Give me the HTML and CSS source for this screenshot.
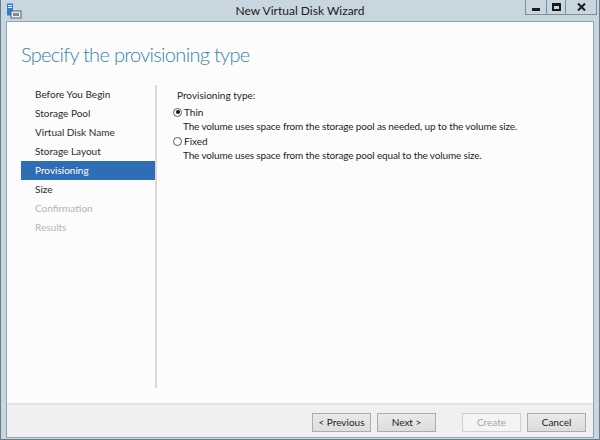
FILE: index.html
```html
<!DOCTYPE html>
<html>
<head>
<meta charset="utf-8">
<link rel="stylesheet" href="styles.css">
</head>
<body>
<div class="window">
  <div class="titlebar">
    <svg class="appicon" width="16" height="16" viewBox="0 0 16 16">
      <rect x="1" y="0.5" width="6" height="12" fill="#2f7fd0"/>
      <rect x="2" y="2" width="4" height="1" fill="#ffffff"/>
      <rect x="2" y="4" width="4" height="1" fill="#ffffff"/>
      <rect x="5" y="8" width="10" height="7" fill="#e8eef3" stroke="#56606a" stroke-width="1"/>
      <rect x="7" y="10" width="6" height="3" fill="#7d8c99"/>
    </svg>
    <div class="title">New Virtual Disk Wizard</div>
    <div class="controls">
      <div class="ctl ctl-min"><span class="min-glyph"></span></div>
      <div class="ctl ctl-max"><span class="max-glyph"></span></div>
      <div class="ctl ctl-close">
        <svg width="9" height="8" viewBox="0 0 9 8"><path d="M1 0.5 L8 7.5 M8 0.5 L1 7.5" stroke="#1a1a1a" stroke-width="2"/></svg>
      </div>
    </div>
  </div>
  <div class="client">
    <div class="body">
      <h1 class="heading">Specify the provisioning type</h1>
      <div class="main">
        <ul class="nav">
          <li>Before You Begin</li>
          <li>Storage Pool</li>
          <li>Virtual Disk Name</li>
          <li>Storage Layout</li>
          <li class="active">Provisioning</li>
          <li>Size</li>
          <li class="disabled">Confirmation</li>
          <li class="disabled">Results</li>
        </ul>
        <div class="divider"></div>
        <div class="content">
          <div class="label">Provisioning type:</div>
          <div class="option">
            <span class="radio checked"></span><span>Thin</span>
          </div>
          <div class="desc">The volume uses space from the storage pool as needed, up to the volume size.</div>
          <div class="option">
            <span class="radio"></span><span>Fixed</span>
          </div>
          <div class="desc">The volume uses space from the storage pool equal to the volume size.</div>
        </div>
      </div>
    </div>
    <div class="footer">
      <button class="btn">&lt; Previous</button>
      <button class="btn">Next &gt;</button>
      <button class="btn btn-disabled gap">Create</button>
      <button class="btn">Cancel</button>
    </div>
  </div>
</div>
</body>
</html>
```
FILE: styles.css
```css
* { box-sizing: border-box; }
html, body { margin: 0; padding: 0; }
body {
  width: 600px;
  height: 440px;
  font-family: Lato, "Open Sans", sans-serif;
  font-size: 10px;
  color: #1e1e1e;
  overflow: hidden;
}
.window {
  width: 600px;
  height: 440px;
  background: #c8d6df;
  border: 1px solid #687c8a;
  border-top: none;
  display: flex;
  flex-direction: column;
}
.titlebar {
  height: 21px;
  display: flex;
  align-items: flex-start;
  position: relative;
  flex: none;
}
.appicon {
  margin: 3px 0 0 5px;
}
.title {
  position: absolute;
  left: 0;
  right: 0;
  top: 3px;
  text-align: center;
  font-size: 12px;
  color: #1b1b1b;
  pointer-events: none;
}
.controls {
  margin-left: auto;
  margin-right: 2px;
  display: flex;
  height: 15px;
  border: 1px solid #7d8d98;
  border-top: none;
}
.ctl {
  display: flex;
  align-items: center;
  justify-content: center;
  height: 14px;
  border-right: 1px solid #7d8d98;
}
.ctl:last-child { border-right: none; }
.ctl-min { width: 21px; }
.ctl-max { width: 19px; }
.ctl-close { width: 30px; }
.min-glyph {
  width: 8px;
  height: 3px;
  background: #1a1a1a;
  margin-top: 5px;
}
.max-glyph {
  width: 9px;
  height: 8px;
  border: 2px solid #1a1a1a;
  border-top-width: 3px;
}
.client {
  flex: 1;
  margin: 0 5px 1px 5px;
  border: 1px solid #93a4b0;
  display: flex;
  flex-direction: column;
  background: #fcfcfc;
}
.body {
  flex: 1;
  display: flex;
  flex-direction: column;
  padding-left: 14px;
  background: #fcfcfc;
}
.heading {
  margin: 18px 0 0 0;
  font-family: Lato, "Open Sans", sans-serif;
  font-weight: 300;
  font-size: 20px;
  letter-spacing: -0.7px;
  line-height: 28px;
  color: #3a84ab;
}
.main {
  flex: 1;
  display: flex;
  margin-top: 17px;
  padding-bottom: 15px;
}
.nav {
  list-style: none;
  margin: 0;
  padding: 0;
  width: 134px;
  flex: none;
}
.nav li {
  height: 19px;
  line-height: 19px;
  padding-left: 14px;
  color: #2b2b2b;
}
.nav li.active {
  background: #2f6db4;
  color: #ffffff;
}
.nav li.disabled {
  color: #b5b5b5;
}
.divider {
  width: 2px;
  background: #d9d9d9;
  flex: none;
}
.content {
  padding-left: 16px;
  padding-top: 1px;
}
.label {
  height: 19px;
  line-height: 19px;
  padding-left: 4px;
}
.option {
  display: flex;
  align-items: center;
  height: 14px;
  line-height: 14px;
}
.radio {
  width: 9px;
  height: 9px;
  border: 1px solid #5a5a5a;
  border-radius: 50%;
  background: #fff;
  margin-right: 2px;
  position: relative;
}
.radio.checked::after {
  content: "";
  position: absolute;
  left: 1.5px;
  top: 1.5px;
  width: 4px;
  height: 4px;
  border-radius: 50%;
  background: #111;
}
.desc {
  height: 15px;
  line-height: 15px;
  padding-left: 10px;
  letter-spacing: -0.15px;
}
.footer {
  flex: none;
  height: 34px;
  background: #f0f0f0;
  border-top: 2px solid #e3e3e3;
  display: flex;
  align-items: center;
  justify-content: flex-end;
  padding-right: 7px;
  padding-top: 2px;
  gap: 6px;
}
.btn {
  width: 59px;
  height: 19px;
  border: 1px solid #acacac;
  background: linear-gradient(#e9e9e9, #dddddd);
  font-family: Lato, "Open Sans", sans-serif;
  font-size: 10px;
  color: #1e1e1e;
  padding: 0;
  line-height: 16px;
}
.btn-disabled {
  background: #f4f4f4;
  border-color: #cfcfcf;
  color: #a6a6a6;
}
.gap { margin-left: 20px; }
```
